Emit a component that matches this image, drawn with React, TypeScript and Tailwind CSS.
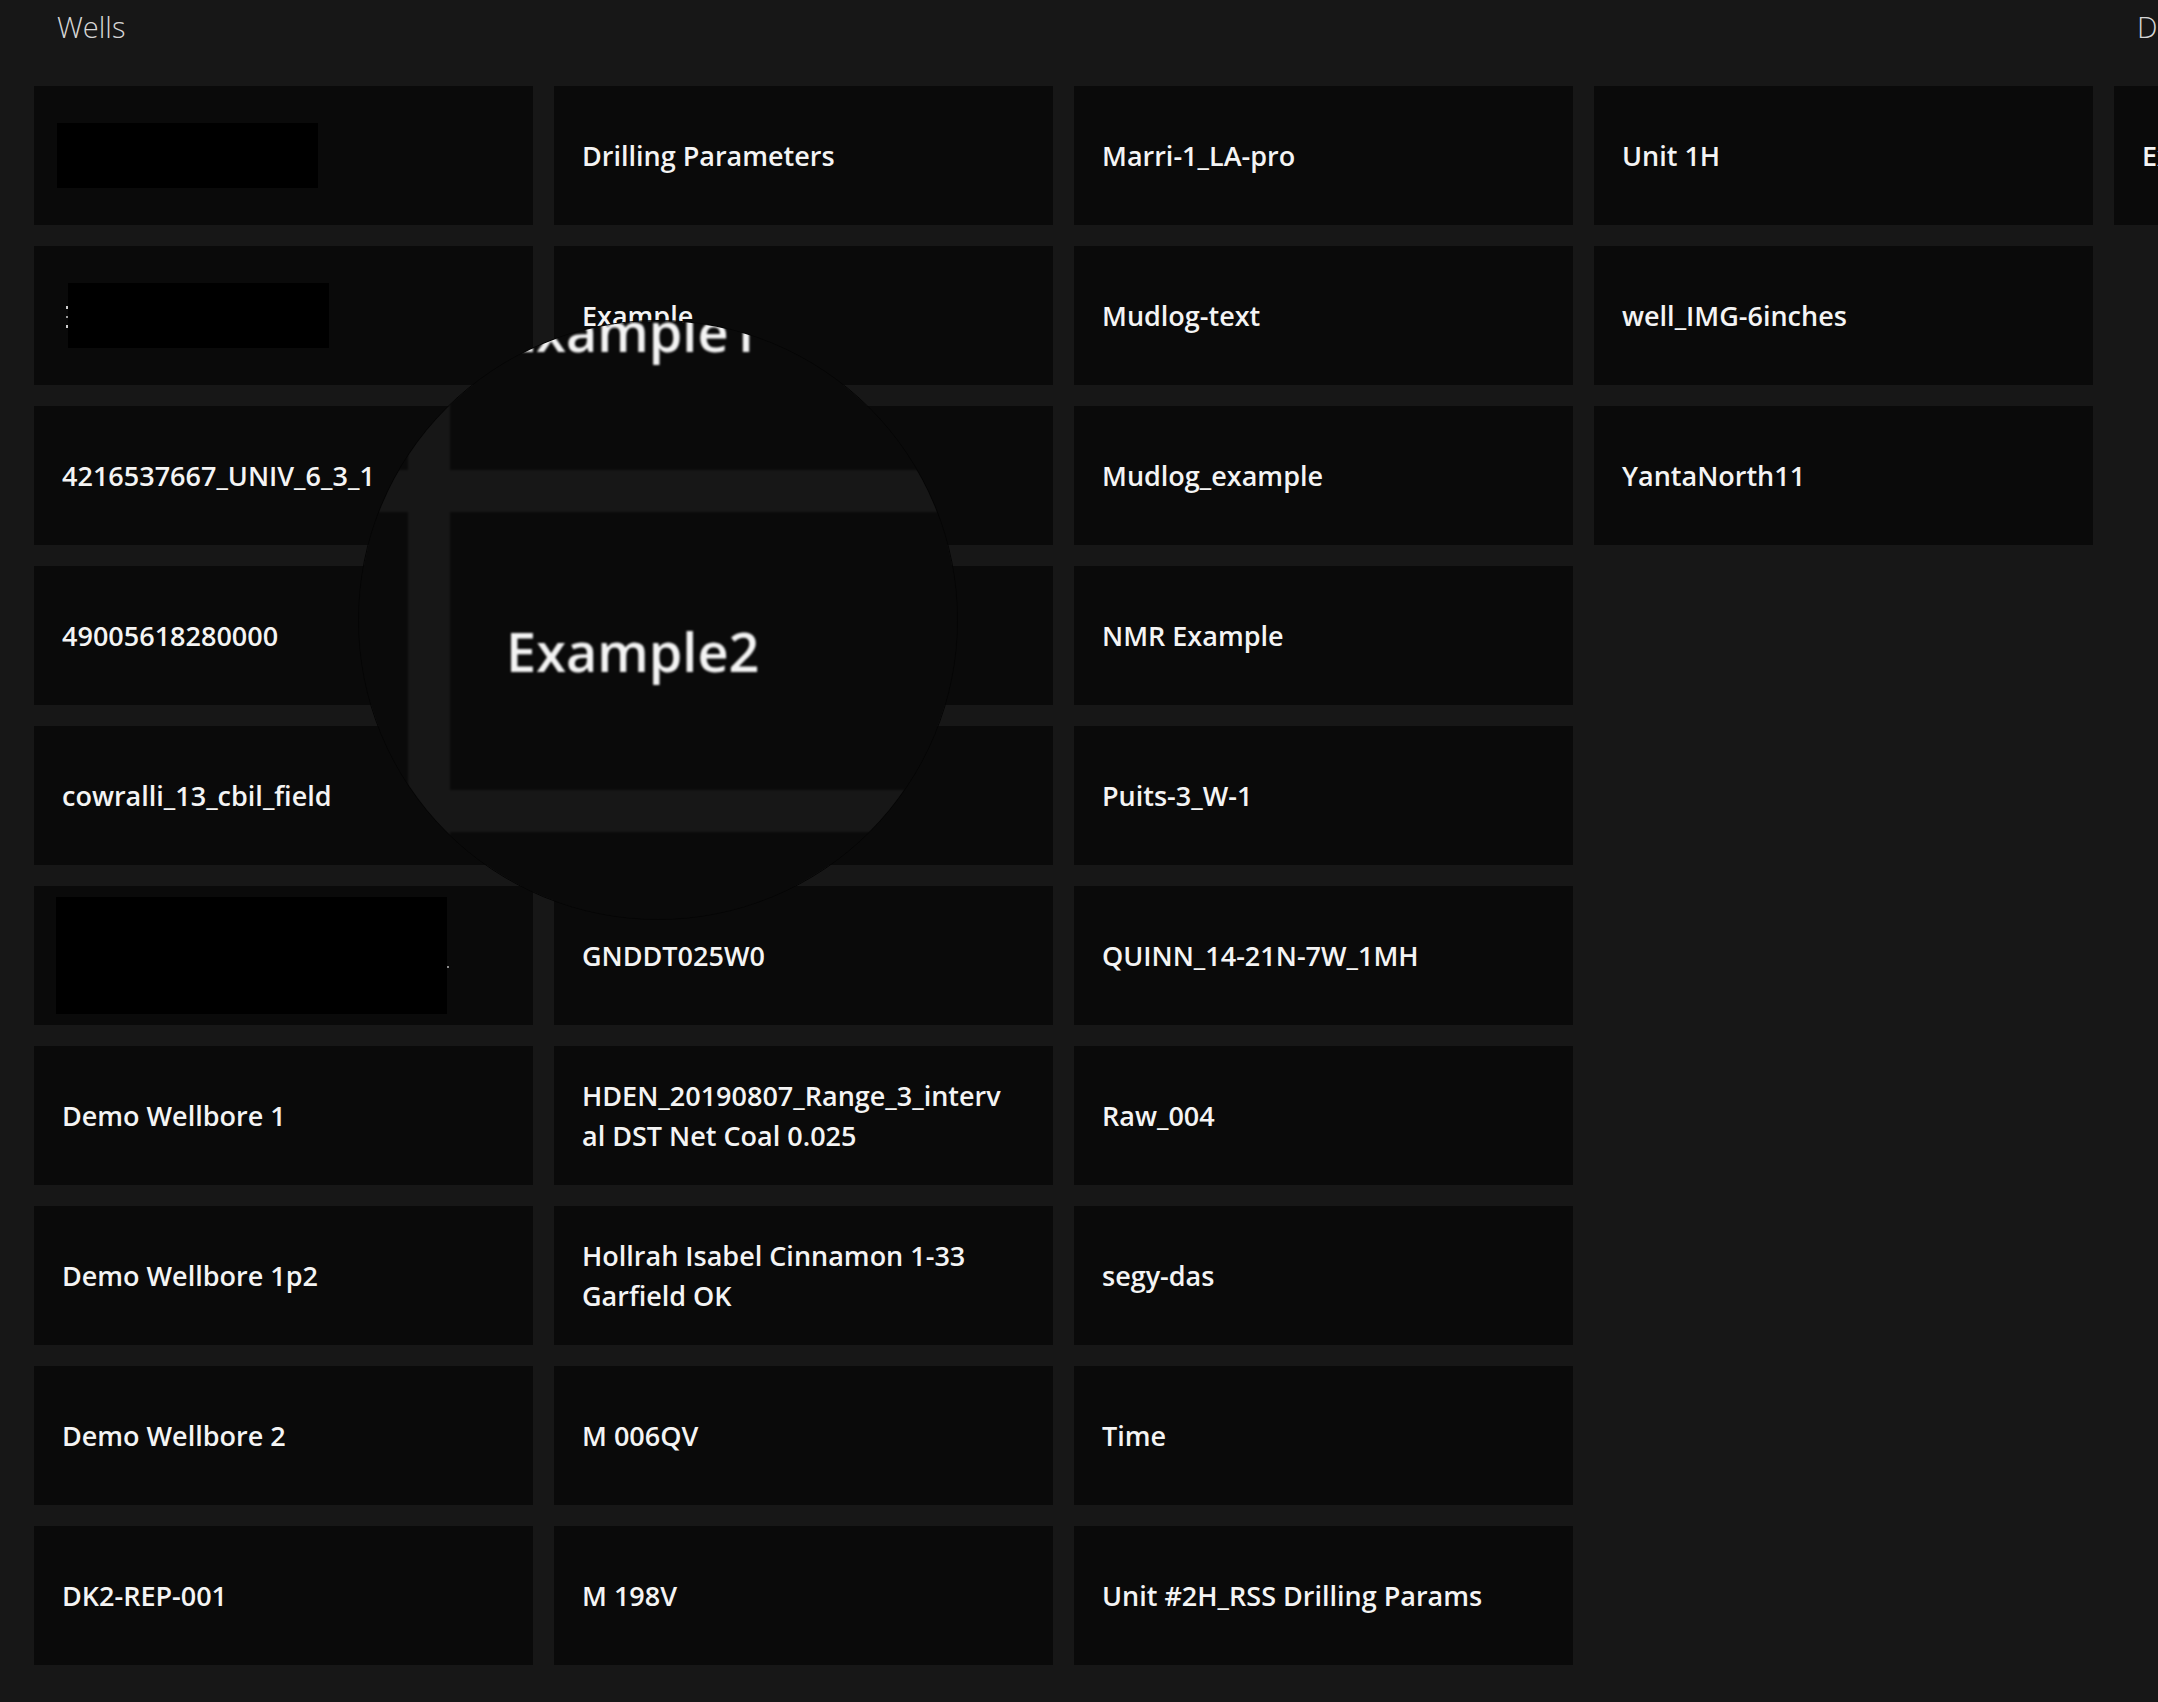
import React from 'react';

type Item =
  | { kind: 'text'; lines: string[] }
  | { kind: 'box' }
  | { kind: 'boxDots' }
  | { kind: 'boxWide' };

const t = (...lines: string[]): Item => ({ kind: 'text', lines });

const wells: Item[] = [
  { kind: 'box' },
  { kind: 'boxDots' },
  t('4216537667_UNIV_6_3_1'),
  t('49005618280000'),
  t('cowralli_13_cbil_field'),
  { kind: 'boxWide' },
  t('Demo Wellbore 1'),
  t('Demo Wellbore 1p2'),
  t('Demo Wellbore 2'),
  t('DK2-REP-001'),
  t('Drilling Parameters'),
  t('Example'),
  t('Example1'),
  t('Example2'),
  t('Example3'),
  t('GNDDT025W0'),
  t('HDEN_20190807_Range_3_interv', 'al DST Net Coal 0.025'),
  t('Hollrah Isabel Cinnamon 1-33', 'Garfield OK'),
  t('M 006QV'),
  t('M 198V'),
  t('Marri-1_LA-pro'),
  t('Mudlog-text'),
  t('Mudlog_example'),
  t('NMR Example'),
  t('Puits-3_W-1'),
  t('QUINN_14-21N-7W_1MH'),
  t('Raw_004'),
  t('segy-das'),
  t('Time'),
  t('Unit #2H_RSS Drilling Params'),
  t('Unit 1H'),
  t('well_IMG-6inches'),
  t('YantaNorth11'),
];

const groups = [
  { title: 'Wells', items: wells },
  { title: 'Datasets', items: [t('Example Dataset')] },
];

function Cell({ item }: { item: Item }) {
  if (item.kind === 'box') {
    return (
      <div className="flex items-center bg-[#0a0a0a] pl-[23px]">
        <div className="h-[65px] w-[261px] bg-black" />
      </div>
    );
  }
  if (item.kind === 'boxDots') {
    return (
      <div className="flex items-center bg-[#0a0a0a] pl-[32px]">
        <div className="flex w-[2px] flex-col items-center gap-[7px] pt-[2px]">
          <span className="h-[3px] w-[2px] bg-[#cfcfcf]" />
          <span className="h-[2px] w-[2px] bg-[#9a9a9a]" />
          <span className="h-[3px] w-[2px] bg-[#cfcfcf]" />
        </div>
        <div className="h-[65px] w-[261px] bg-black" />
      </div>
    );
  }
  if (item.kind === 'boxWide') {
    return (
      <div className="flex items-center bg-[#0a0a0a] pl-[22px]">
        <div className="h-[117px] w-[391px] bg-black" />
        <span className="mt-[23px] h-[2px] w-[2px] bg-[#8a8a8a]" />
      </div>
    );
  }
  return (
    <div className="flex flex-col justify-center overflow-hidden bg-[#0a0a0a] pl-[28px] pr-[20px] text-[27px] font-semibold leading-[40px] text-[#f4f4f4]">
      {item.lines.map((line, i) => (
        <span key={i} className="whitespace-nowrap">
          {line}
        </span>
      ))}
    </div>
  );
}

function Page() {
  return (
    <div className="flex h-[1702px] w-[2158px] gap-[21px] overflow-hidden bg-[#171717] pl-[34px] font-['Open_Sans',sans-serif]">
      {groups.map((g) => (
        <div key={g.title} className="flex shrink-0 flex-col">
          <div className="flex h-[86px] items-start pl-[23px] pt-[7px] text-[29px] font-light leading-[40px] text-[#d6d6d6]">
            {g.title}
          </div>
          <div className="grid auto-cols-[499px] grid-flow-col grid-rows-[repeat(10,139px)] gap-[21px]">
            {g.items.map((item, i) => (
              <Cell key={i} item={item} />
            ))}
          </div>
        </div>
      ))}
    </div>
  );
}

export default function App() {
  return (
    <div className="relative h-[1702px] w-[2158px] overflow-hidden">
      <Page />
      {/* magnifier lens */}
      <div className="pointer-events-none absolute left-[358px] top-[320px] h-[600px] w-[600px] overflow-hidden rounded-full border border-[#050505]">
        <div className="absolute left-[-359px] top-[-321px] h-[1702px] w-[2158px] origin-[658px_620px] scale-200 blur-[0.5px]">
          <Page />
        </div>
      </div>
    </div>
  );
}
